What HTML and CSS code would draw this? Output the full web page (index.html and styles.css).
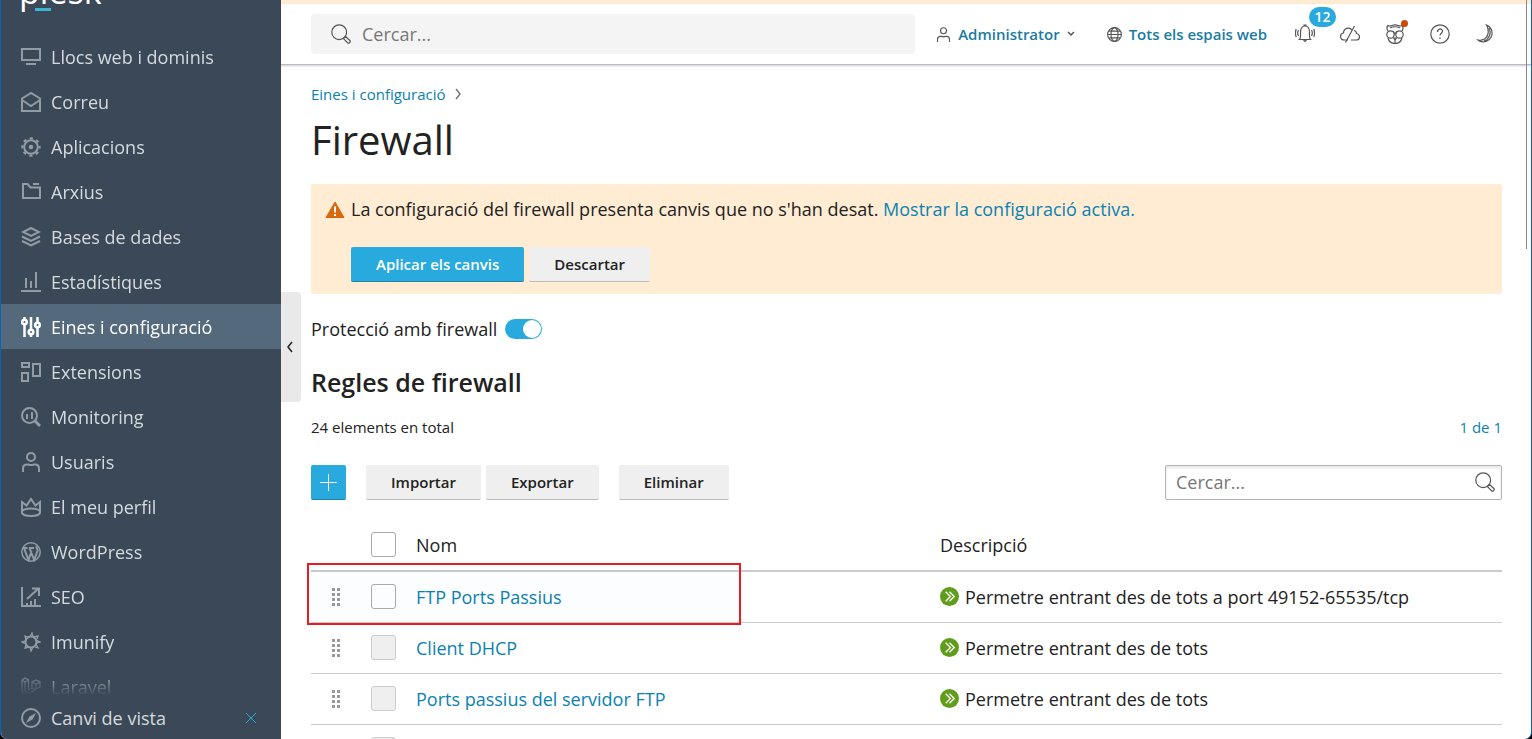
FILE: index.html
```
<!DOCTYPE html>
<html lang="ca">
<head>
<meta charset="utf-8">
<title>Firewall</title>
<link rel="stylesheet" href="styles.css">
</head>
<body>
<svg class="defs" aria-hidden="true">
  <symbol id="i-search" viewBox="0 0 20 20"><circle cx="8.2" cy="8.2" r="7.4"/><path d="M12.4 14.4l2-2 4.4 4.1c1.300 1.200-.8 3.600-2.200 2.300z"/></symbol>
  <symbol id="i-user" viewBox="0 0 20 20"><circle cx="10" cy="5" r="4"/><path d="M2 20v-3.500c0-2.500 1.700-4 4-4h1.200c1.900.8 3.700.8 5.600 0H14c2.300 0 4 1.500 4 4V20"/></symbol>
  <symbol id="i-drag" viewBox="0 0 8 18"><path d="M0 0h3v3H0zM5 0h3v3H5zM0 5h3v3H0zM5 5h3v3H5zM0 10h3v3H0zM5 10h3v3H5zM0 15h3v3H0zM5 15h3v3H5z"/></symbol>
  <symbol id="i-allow" viewBox="0 0 20 20"><circle cx="10" cy="10" r="10" fill="#5f9d1b"/><path d="M6 5l5 5-5 5M10 5l5 5-5 5" fill="none" stroke="#fff" stroke-width="1.400"/></symbol>
</svg>
<div class="window">
  <aside class="sidebar">
    <a class="logo" href="#">plesk<span class="logo-bar"></span></a>
    <nav class="menu">
      <a class="item" href="#"><svg class="icon" viewBox="0 0 20 20"><path d="M1 2h18v11H1z"/><path d="M5 17h10"/></svg>Llocs web i dominis</a>
      <a class="item" href="#"><svg class="icon" viewBox="0 0 20 20"><path d="M1 6.500L10 1l9 5.500V19H1z"/><path d="M1 8l9 6 9-6"/></svg>Correu</a>
      <a class="item" href="#"><svg class="icon" viewBox="0 0 20 20"><circle cx="10" cy="10" r="6.800"/><circle cx="10" cy="10" r="8.700" stroke-dasharray="3.200 3.633" stroke-dashoffset="1.600"/><circle cx="10" cy="10" r="2.300" class="solid"/></svg>Aplicacions</a>
      <a class="item" href="#"><svg class="icon" viewBox="0 0 20 20"><path d="M2 2h4.500l3 3.500H19V16H2z"/><path d="M12 2h6"/></svg>Arxius</a>
      <a class="item" href="#"><svg class="icon" viewBox="0 0 20 20"><path d="M10 1l8 4-8 4-8-4z"/><path d="M1 9.500l9 4.500 9-4.500M1 14l9 4.500 9-4.500"/></svg>Bases de dades</a>
      <a class="item" href="#"><svg class="icon" viewBox="0 0 20 20"><path d="M0 19h20M5 16V6M10 16V9M15 16V0"/></svg>Estadístiques</a>
      <a class="item active" href="#" aria-current="page"><svg class="icon" viewBox="0 0 20 20"><circle cx="3.500" cy="5" r="2.300"/><circle cx="10" cy="15" r="2.300"/><circle cx="16.500" cy="8" r="2.300"/><path d="M3.500 0v3M3.500 7v13M10 0v13M10 17v3M16.500 0v6M16.500 10v10"/></svg>Eines i configuració</a>
      <a class="item" href="#"><svg class="icon" viewBox="0 0 20 20"><path d="M1 1h7v4H1zM1 11h6v8H1zM12 2h7v12h-7z"/></svg>Extensions</a>
      <a class="item" href="#"><svg class="icon" viewBox="0 0 20 20"><circle cx="8.500" cy="8.500" r="7.500"/><path d="M6 7v5M11 5v7"/><path d="M14 14l5 5" stroke-width="3"/></svg>Monitoring</a>
      <a class="item" href="#"><svg class="icon"><use href="#i-user"/></svg>Usuaris</a>
      <a class="item" href="#"><svg class="icon" viewBox="0 0 20 20"><path d="M1 16V5l4.500 3.500L10 2l4.500 6.500L19 5v11c-2 4-16 4-18 0z"/><path d="M1 14c3-3.500 15-3.500 18 0"/></svg>El meu perfil</a>
      <a class="item" href="#"><svg class="icon" viewBox="0 0 20 20"><circle cx="10" cy="10" r="9.200" stroke-width="1.500"/><path d="M3 6l4.500 12L10.500 9M8.500 6l4.700 12 3.300-9c.5-2-1.500-3-1-5M2 6h4.500M8 6h5"/></svg>WordPress</a>
      <a class="item" href="#"><svg class="icon" viewBox="0 0 20 20"><path d="M1 0v19h19M6 19v-3M10 19v-5M14 19v-7"/><path d="M6 12L17 2M11 1.500h7V9"/></svg>SEO</a>
      <a class="item" href="#"><svg class="icon thin" viewBox="0 0 20 20"><circle cx="10" cy="10" r="5.500" stroke-width="2"/><path d="M9 5l2-4 1 4M13 5l4-1-1 3M15 8l4 2-4 1M15 12l2 4-3-1M12 15l-2 4-1-4M8 15l-4 1 1-3M5 12l-4-2 4-1M5 8L4 4l3 1"/></svg>Imunify</a>
      <a class="item" href="#"><svg class="icon thin" viewBox="0 0 20 20"><path d="M1 3l3-2 3.500 2v10L11 11V5l4-2 4 2v5l-4 2-8 7-6-4zM1 3l3 2 3.500-2M4 5v9l4 2 7-4M11 5l4 2 4-2M15 7v5M11 11l4 2"/></svg>Laravel</a>
    </nav>
    <div class="view-switch">
      <a class="view-link" href="#"><svg class="icon" viewBox="0 0 20 20"><circle cx="10" cy="10" r="9"/><path d="M15 5l-3.500 6.500L5 15l3.500-6.500z" class="solid"/></svg>Canvi de vista</a>
      <button class="close" aria-label="Tancar"><svg width="12" height="12" viewBox="0 0 12 12"><path d="M1 1l10 10M11 1L1 11"/></svg></button>
    </div>
  </aside>
  <button class="collapse" aria-label="Replegar el menú"><svg width="8" height="12" viewBox="0 0 8 12"><path d="M6 1L2 6l4 5"/></svg></button>

  <div class="page">
    <div class="strip"></div>
    <header class="topbar">
      <label class="search"><svg class="line-icon"><use href="#i-search"/></svg><input type="search" placeholder="Cercar..." aria-label="Cercar"></label>
      <a class="top-link" href="#"><svg class="small-icon" width="15" height="15"><use href="#i-user"/></svg>Administrator<svg class="caret" width="8" height="6" viewBox="0 0 8 6"><path d="M1 1l3 3 3-3"/></svg></a>
      <a class="top-link" href="#"><svg class="small-icon" width="15" height="15" viewBox="0 0 20 20"><circle cx="10" cy="10" r="9.200"/><ellipse cx="10" cy="10" rx="4.700" ry="9.200"/><path d="M2.500 5.500h15M1 10h18M2.500 14.500h15"/></svg>Tots els espais web</a>
      <div class="tools">
        <button class="tool" aria-label="Notificacions"><svg class="line-icon" viewBox="0 0 20 20"><path d="M4.500 15.500c1.500-1.500 1-4 1-7C5.500 4.500 7 2 10 2s4.500 2.500 4.500 6.500c0 3-.5 5.500 1 7zM9 2V1h2v1M8.500 16l1.500 1.500 1.500-1.500M3.500 6C2.400 8 2.400 10 3.500 12M1.200 5c-1 3-1 5.500 0 8M16.500 6c1.100 2 1.100 4 0 6M18.800 5c1 3 1 5.500 0 8"/></svg><span class="badge">12</span></button>
        <button class="tool" aria-label="Núvol"><svg class="line-icon" viewBox="0 0 20 20"><path d="M8 16H4.500C-.5 16-.5 9.500 3.500 9c0-5 6-6.500 8.500-3M14 6.500c2 .5 2.500 2 2.500 3 4 .5 4 6.500 0 6.500H11M5.500 18.500L14.500 2"/></svg></button>
        <button class="tool" aria-label="Assistent"><svg class="line-icon" viewBox="0 0 20 20"><path d="M3 7C1.500 4.500 1.500 3 3 1.500c1.500 1 2.500.5 4 0 2-.7 4-.7 6 0 1.500.5 2.500 1 4 0C18.500 3 18.500 4.500 17 7M5 4c3-1.500 7-1.500 10 0M3 14c1 4 4 5.500 7 5.500s6-1.500 7-5.500M8.500 14l1.500 2 1.500-2zM10 16v3.500M8 7l2 3 2-3"/><circle cx="5.500" cy="10.500" r="3.700"/><circle cx="14.500" cy="10.500" r="3.700"/></svg><span class="dot"></span></button>
        <button class="tool" aria-label="Ajuda"><svg class="line-icon" viewBox="0 0 20 20"><circle cx="10" cy="10" r="9.200"/><path d="M7.500 8c0-4 5-3.800 5-.8 0 2-2.500 2-2.500 4.300M10 13.500V15"/></svg></button>
        <button class="tool" aria-label="Mode fosc"><svg class="line-icon" viewBox="0 0 20 20"><path d="M11.500 1c7 3 7 11.500 2 15-3.500 2.800-8 2.300-10.500 0 5 1 9-1.500 10-6 .6-3.500 0-6.500-1.500-9zM14 4c2.500 5 .5 11-5 13"/></svg></button>
      </div>
    </header>

    <main class="content">
      <nav class="crumbs"><a href="#">Eines i configuració</a><svg width="8" height="12" viewBox="0 0 8 12"><path d="M2 1l4 5-4 5"/></svg></nav>
      <h1>Firewall</h1>

      <section class="alert">
        <svg class="warn" width="20" height="18" viewBox="0 0 20 18"><path d="M10 1L19 16.500H1z" fill="#d9690f" stroke="#d9690f" stroke-linejoin="round"/><path d="M10 5.500v6M10 13v2" stroke="#fff" stroke-width="2"/></svg>
        <div class="alert-body">
          <p>La configuració del firewall presenta canvis que no s'han desat. <a href="#">Mostrar la configuració activa.</a></p>
          <div class="buttons"><button class="btn primary">Aplicar els canvis</button><button class="btn">Descartar</button></div>
        </div>
      </section>

      <label class="switch-row">Protecció amb firewall<input class="switch" type="checkbox" role="switch" checked></label>

      <h2>Regles de firewall</h2>
      <div class="summary"><span>24 elements en total</span><a href="#">1 de 1</a></div>

      <div class="toolbar">
        <button class="btn primary add" aria-label="Afegir"><svg width="17" height="17" viewBox="0 0 17 17"><path d="M8.500 0v17M0 8.500h17"/></svg></button>
        <div class="buttons"><button class="btn">Importar</button><button class="btn">Exportar</button></div>
        <button class="btn">Eliminar</button>
        <label class="filter"><input type="search" placeholder="Cercar..." aria-label="Cercar regles"><svg class="line-icon"><use href="#i-search"/></svg></label>
      </div>

      <div class="rules">
        <table>
          <colgroup><col class="c-drag"><col class="c-check"><col class="c-name"><col></colgroup>
          <thead>
            <tr><th></th><th><input type="checkbox" aria-label="Seleccionar-ho tot"></th><th>Nom</th><th>Descripció</th></tr>
          </thead>
          <tbody>
            <tr><td><svg class="drag"><use href="#i-drag"/></svg></td><td><input type="checkbox" aria-label="FTP Ports Passius"></td><td><a href="#">FTP Ports Passius</a></td><td><span class="desc"><svg class="allow"><use href="#i-allow"/></svg>Permetre entrant des de tots a port 49152-65535/tcp</span></td></tr>
            <tr><td><svg class="drag"><use href="#i-drag"/></svg></td><td><input type="checkbox" disabled aria-label="Client DHCP"></td><td><a href="#">Client DHCP</a></td><td><span class="desc"><svg class="allow"><use href="#i-allow"/></svg>Permetre entrant des de tots</span></td></tr>
            <tr><td><svg class="drag"><use href="#i-drag"/></svg></td><td><input type="checkbox" disabled aria-label="Ports passius del servidor FTP"></td><td><a href="#">Ports passius del servidor FTP</a></td><td><span class="desc"><svg class="allow"><use href="#i-allow"/></svg>Permetre entrant des de tots</span></td></tr>
            <tr><td></td><td><input type="checkbox" disabled aria-label="Regla"></td><td></td><td></td></tr>
          </tbody>
        </table>
        <div class="highlight"></div>
      </div>
    </main>
    <div class="scroll-thumb"></div>
  </div>
</div>
</body>
</html>
```
FILE: styles.css
```
* { box-sizing: border-box; }

body {
  margin: 0;
  background: #000;
  color: #222;
  font: 18px/24px "Open Sans", sans-serif;
}

a { color: #0a82b1; text-decoration: none; }
button, input { font: inherit; color: inherit; }
button { padding: 0; border: 0; background: none; }
h1, h2, p { margin: 0; }
svg { flex: none; fill: none; }
.defs { position: absolute; width: 0; height: 0; }

.window {
  position: relative;
  display: flex;
  height: 100vh;
  overflow: hidden;
  background: #fff;
  border: solid #0a63ae;
  border-width: 0 1px;
  border-radius: 0 0 7px 7px;
}

/* Sidebar */
.sidebar {
  display: flex;
  flex: none;
  flex-direction: column;
  width: 280px;
  background: #3a4858;
}
.logo {
  position: relative;
  flex: none;
  height: 64px;
  margin-top: -30px;
  padding-left: 18px;
  color: #fff;
  font-size: 34px;
  line-height: 42px;
}
.logo-bar {
  position: absolute;
  top: 38px;
  left: 34px;
  width: 16px;
  height: 3px;
  background: #3fb3d3;
}
.menu {
  flex: 1;
  min-height: 0;
  overflow: hidden;
  mask-image: linear-gradient(#000 calc(100% - 28px), transparent);
}
.item, .view-link {
  display: flex;
  align-items: center;
  gap: 10px;
  height: 45px;
  padding-left: 20px;
  color: #d6dadd;
}
.icon {
  width: 20px;
  height: 20px;
  stroke: #939ca5;
  stroke-width: 2;
}
.icon .solid { fill: #939ca5; stroke: none; }
.icon.thin { stroke-width: 1.300; }
.active { background: #546a7c; color: #fff; }
.active .icon { stroke: #fff; stroke-width: 2.500; }
.view-switch {
  display: flex;
  flex: none;
  align-items: center;
  justify-content: space-between;
  height: 43px;
  padding-right: 24px;
}
.close { display: flex; stroke: #28aade; }
.collapse {
  position: absolute;
  top: 292px;
  left: 280px;
  display: flex;
  align-items: center;
  justify-content: center;
  width: 20px;
  height: 110px;
  padding-right: 2px;
  background: #e9e9e9;
  border-radius: 0 4px 4px 0;
  stroke: #222;
  stroke-width: 1.500;
}

/* Top bar */
.page { position: relative; flex: 1; min-width: 0; }
.strip { height: 4px; background: #ffecd3; }
.topbar {
  display: flex;
  align-items: center;
  height: 61px;
  padding: 0 36px 0 30px;
  border-bottom: 1px solid #b9b9c1;
  box-shadow: 0 1px 2px #00002033;
}
.search {
  display: flex;
  flex: 1;
  align-items: center;
  gap: 11px;
  height: 40px;
  max-width: 604px;
  margin-right: auto;
  padding: 0 20px;
  background: #f4f4f4;
  border-radius: 4px;
}
.search input, .filter input {
  flex: 1;
  min-width: 0;
  padding: 0;
  border: 0;
  outline: 0;
  background: none;
}
::placeholder { color: #777; opacity: 1; }
.line-icon { width: 20px; height: 20px; stroke: #555; stroke-width: 1.200; }
.top-link {
  display: flex;
  align-items: center;
  gap: 7px;
  margin-left: 20px;
  color: #1b7ba3;
  font-size: 15px;
  font-weight: 600;
  white-space: nowrap;
}
.top-link + .top-link { margin-left: 32px; }
.small-icon { stroke: #555; stroke-width: 1.500; }
.caret { stroke: #555; stroke-width: 1.500; }
.tools { display: flex; gap: 25px; margin-left: 28px; }
.tool { position: relative; display: flex; }
.badge {
  position: absolute;
  top: -17px;
  left: 14px;
  width: 27px;
  height: 20px;
  border-radius: 10px;
  background: #28aade;
  color: #fff;
  font-size: 14px;
  font-weight: 600;
  line-height: 20px;
}
.dot {
  position: absolute;
  top: -4px;
  left: 16px;
  width: 7px;
  height: 7px;
  border-radius: 50%;
  background: #cb4a0a;
}

/* Content */
.content { padding: 17px 29px 0 30px; }
.crumbs {
  display: flex;
  align-items: center;
  gap: 8px;
  font-size: 15px;
  stroke: #777;
  stroke-width: 1.500;
}
h1 { margin-top: 6px; font-size: 40px; font-weight: 400; line-height: 56px; }
.alert {
  display: flex;
  gap: 6px;
  margin-top: 16px;
  padding: 13px 14px 12px;
  background: #ffecd3;
  border-radius: 2px;
}
.warn { margin-top: 4px; }
.buttons { display: flex; gap: 5px; }
.alert .buttons { margin-top: 26px; }
.btn {
  height: 35px;
  padding: 0 25px;
  border-bottom: 1px solid #bbb;
  border-radius: 2px;
  background: #efefef;
  font-size: 15px;
  font-weight: 600;
}
.primary { background: #28aade; border-color: #1c83ac; color: #fff; }
.switch-row { display: flex; align-items: center; gap: 8px; margin-top: 23px; }
.switch {
  appearance: none;
  display: flex;
  justify-content: flex-end;
  width: 37px;
  height: 20px;
  margin: 0;
  padding: 1px;
  border-radius: 10px;
  background: #28aade;
}
.switch::before { content: ""; width: 18px; height: 18px; border-radius: 50%; background: #fff; }
h2 { margin-top: 25px; font-size: 25px; font-weight: 600; line-height: 32px; }
.summary {
  display: flex;
  justify-content: space-between;
  margin-top: 17px;
  font-size: 15px;
}
.toolbar { display: flex; gap: 20px; margin-top: 26px; }
.add { display: flex; align-items: center; justify-content: center; width: 35px; padding: 0; stroke: #fff; }
.filter {
  display: flex;
  align-items: center;
  width: 337px;
  height: 35px;
  margin-left: auto;
  padding: 0 6px 1px 10px;
  border: 1px solid #b3b3b3;
  border-radius: 2px;
  box-shadow: inset 0 2px 3px #0000001a;
}

/* Rules table */
.rules { position: relative; margin-top: 20px; }
table { width: 100%; border-collapse: separate; border-spacing: 0; table-layout: fixed; }
.c-drag { width: 50px; }
.c-check { width: 55px; }
.c-name { width: 44%; }
th, td { height: 51px; padding: 0; border-bottom: 1px solid #ccc; font-weight: 400; text-align: left; }
th { height: 52px; border-bottom-width: 2px; }
td:first-child { text-align: center; }
td input, th input {
  appearance: none;
  display: block;
  width: 25px;
  height: 25px;
  margin: 0 10px 2px;
  border: 1px solid #aaa;
  border-radius: 3px;
  background: #fff;
}
td input:disabled { border-color: #ccc; background: #efefef; }
.drag { display: block; width: 8px; height: 18px; margin: 0 auto; fill: #999; }
.desc { display: flex; align-items: center; gap: 6px; }
.allow { width: 19px; height: 19px; margin-bottom: 2px; }
.highlight {
  position: absolute;
  top: 43px;
  left: -4px;
  width: 434px;
  height: 62px;
  border: 2px solid #e81b23;
  background: #0060c003;
  pointer-events: none;
}
.scroll-thumb { position: absolute; top: 0; right: 4px; width: 1px; height: 249px; background: #888; }
```
